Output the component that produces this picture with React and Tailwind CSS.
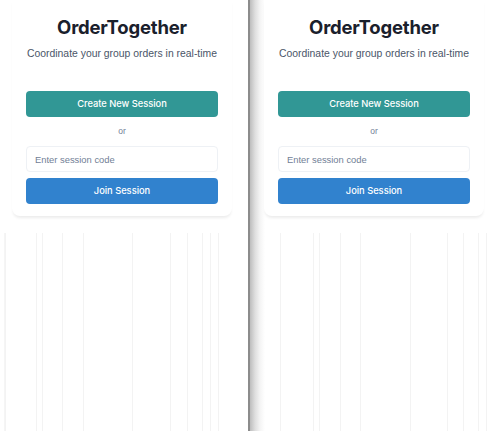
import React from "react";

const leftLines = ["w-[31px]", "w-[6px]", "w-[20px]", "w-[21px]", "w-[49px]", "w-[38px]", "w-[17px]", "w-[15px]", "w-[8px]", "w-[8px]", "w-[2px]"];
const rightLines = ["w-[33px]", "w-[6px]", "w-[21px]", "w-[20px]", "w-[50px]", "w-[37px]", "w-[16px]", "w-[15px]", "w-[8px]", "w-[2px]"];

function SessionCard({ offset }) {
    const [code, setCode] = React.useState("");
    return (
        <div className={`${offset} w-[220px] px-[14px] pt-[13px] pb-[12px] bg-white rounded-b-lg shadow-[0_3px_3px_-1px_rgba(0,0,0,0.08)] flex flex-col`}>
            <h1 className="text-center text-[18.5px] leading-[28px] font-bold text-[#1a202c] tracking-[-0.2px] whitespace-nowrap">OrderTogether</h1>
            <p className="mt-[4px] text-center font-['Liberation_Sans',sans-serif] text-[10.4px] leading-[18px] text-[#4a5568] whitespace-nowrap">Coordinate your group orders in real-time</p>
            <button className="mt-[28px] h-[26px] rounded-[4px] bg-[#319795] text-white text-[9.3px] font-medium">Create New Session</button>
            <div className="mt-[7px] text-center font-['Liberation_Sans',sans-serif] text-[8.5px] leading-[14px] text-[#718096]">or</div>
            <input
                value={code}
                onChange={e => setCode(e.target.value)}
                placeholder="Enter session code"
                className="mt-[8px] h-[26px] rounded-[4px] border border-[#eef1f5] px-[8px] font-['Liberation_Sans',sans-serif] text-[9.4px] text-[#2d3748] placeholder:text-[#718096] outline-none"
            />
            <button className="mt-[6px] h-[26px] rounded-[4px] bg-[#3182ce] text-white text-[9.3px] font-medium">Join Session</button>
        </div>
    );
}

function Lines({ first, widths }) {
    return (
        <div className="mt-[17px] flex flex-1">
            <div className={first} />
            {widths.map((w, i) => (
                <div key={i} className={`${w} border-l border-[#f3f3f3]`} />
            ))}
        </div>
    );
}

export default function App() {
    return (
        <div className="flex h-[431px] w-[500px] overflow-hidden bg-white font-['Inter',sans-serif]">
            <div className="w-[248px] flex flex-col bg-white">
                <SessionCard offset="ml-[12px]" />
                <Lines first="w-[5px] border-r border-[#f5f5f5]" widths={leftLines} />
            </div>
            <div className="w-[2px] bg-[#8c8c8c]" />
            <div className="flex-1 flex flex-col bg-[linear-gradient(to_right,#bdbdbd,#dedede_5px,#f4f4f4_10px,#fff_15px)]">
                <SessionCard offset="ml-[14px]" />
                <Lines first="w-[30px]" widths={rightLines} />
            </div>
        </div>
    );
}
